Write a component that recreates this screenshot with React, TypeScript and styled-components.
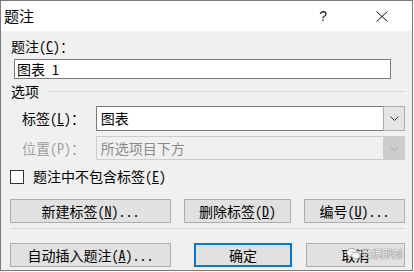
import styled, { createGlobalStyle } from 'styled-components';

const GlobalStyle = createGlobalStyle`
  html, body {
    margin: 0;
    padding: 0;
    background: #ffffff;
  }
  body {
    width: 414px;
    height: 272px;
    overflow: hidden;
  }
`;

const FONT = `"Noto Sans Mono CJK SC", "Noto Sans CJK SC", "Liberation Mono", monospace`;

const Window = styled.div`
  position: relative;
  box-sizing: border-box;
  width: 413px;
  height: 271px;
  border: 1px solid #7a7a7a;
  background: #f0f0f0;
  display: flex;
  flex-direction: column;
  font-family: ${FONT};
  font-size: 14px;
  line-height: 19px;
  color: #000000;
`;

const TitleBar = styled.div`
  height: 30px;
  background: #ffffff;
  display: flex;
  align-items: center;
  padding: 0 23px 0 3px;
`;

const Title = styled.span`
  flex: 1;
  font-family: "Noto Sans CJK SC", sans-serif;
  font-size: 15px;
  line-height: 16px;
`;

const HelpGlyph = styled.span`
  font-family: "Liberation Sans", sans-serif;
  font-size: 14px;
  line-height: 14px;
  color: #1a1a1a;
  margin-right: 48px;
`;

const Body = styled.div`
  flex: 1;
  display: flex;
  flex-direction: column;
  padding: 6px 7px 0 9px;
`;

interface LabelProps { disabled?: boolean; indent?: number }
const Label = styled.span<LabelProps>`
  padding-left: ${(p) => p.indent ?? 0}px;
  color: ${(p) => (p.disabled ? '#a0a0a0' : '#000000')};
  white-space: nowrap;
`;

const TextInput = styled.div`
  box-sizing: border-box;
  margin: 3px 0 0 4px;
  width: 377px;
  height: 20px;
  border: 1px solid #7a7a7a;
  background: #ffffff;
  padding-left: 2px;
  line-height: 18px;
  white-space: pre;
`;

const GroupHeader = styled.div`
  margin-top: 3px;
  display: flex;
  align-items: center;
  gap: 8px;
`;

const GroupLine = styled.div`
  flex: 1;
  height: 1px;
  background: #dcdcdc;
`;

interface RowProps { top: number }
const FieldRow = styled.div<RowProps>`
  margin-top: ${(p) => p.top}px;
  display: flex;
  align-items: center;
`;

const LabelCell = styled.div`
  width: 86px;
  display: flex;
`;

interface ComboProps { disabled?: boolean; h: number }
const Combo = styled.div<ComboProps>`
  box-sizing: border-box;
  width: 310px;
  height: ${(p) => p.h}px;
  border: 1px solid ${(p) => (p.disabled ? '#cccccc' : '#7a7a7a')};
  background: ${(p) => (p.disabled ? '#f0f0f0' : '#ffffff')};
  color: ${(p) => (p.disabled ? '#8a8a8a' : '#000000')};
  display: flex;
  align-items: center;
`;

const ComboText = styled.span`
  flex: 1;
  padding-left: 4px;
`;

interface DropProps { disabled?: boolean }
const DropButton = styled.div<DropProps>`
  box-sizing: border-box;
  width: 22px;
  align-self: stretch;
  margin: -1px -1px -1px 0;
  border: 1px solid ${(p) => (p.disabled ? '#cccccc' : '#adadad')};
  background: ${(p) => (p.disabled ? '#cccccc' : '#e5e5e5')};
  display: flex;
  align-items: center;
  justify-content: center;
`;

const CheckRow = styled.div`
  margin-top: 7px;
  display: flex;
  align-items: center;
  gap: 9px;
`;

const CheckBox = styled.span`
  box-sizing: border-box;
  width: 14px;
  height: 14px;
  border: 1px solid #333333;
  background: #ffffff;
`;

const ButtonRow = styled.div<RowProps>`
  margin-top: ${(p) => p.top}px;
  display: flex;
`;

interface ButtonProps { w: number; gap?: number; primary?: boolean }
const Button = styled.button<ButtonProps>`
  box-sizing: border-box;
  width: ${(p) => p.w}px;
  height: 24px;
  margin-left: ${(p) => p.gap ?? 0}px;
  padding: 0;
  font-family: ${FONT};
  font-size: 14px;
  line-height: 20px;
  color: #000000;
  background: #e1e1e1;
  border: ${(p) => (p.primary ? '2px solid #0078d7' : '1px solid #adadad')};
  white-space: pre;
`;

const Separator = styled.div`
  margin: 5px 0 0 0;
  height: 1px;
  background: #dadada;
`;

const Watermark = styled.div`
  position: absolute;
  right: 10px;
  bottom: 10px;
  display: flex;
  align-items: center;
  gap: 1px;
  font-family: "Noto Sans CJK SC", sans-serif;
  font-size: 10px;
  line-height: 12px;
  color: #ffffff;
  text-shadow: 0 0 1px #5a5a5a, 0 0 1px #5a5a5a;
  opacity: 0.9;
`;

function Chevron({ color }: { color: string }) {
  return (
    <svg width="9" height="5" viewBox="0 0 9 5">
      <path d="M0.5 0.5 L4.5 4.5 L8.5 0.5" fill="none" stroke={color} strokeWidth="1" />
    </svg>
  );
}

function CloseIcon() {
  return (
    <svg width="14" height="11" viewBox="0 0 14 11">
      <path d="M1.5 0.5 L12.5 10.5 M12.5 0.5 L1.5 10.5" stroke="#111" strokeWidth="1" fill="none" />
    </svg>
  );
}

export default function App() {
  return (
    <>
      <GlobalStyle />
      <Window>
        <TitleBar>
          <Title>题注</Title>
          <HelpGlyph>?</HelpGlyph>
          <CloseIcon />
        </TitleBar>
        <Body>
          <Label indent={1}>题注(<u>C</u>)：</Label>
          <TextInput>图表 1</TextInput>

          <GroupHeader>
            <Label indent={1}>选项</Label>
            <GroupLine />
          </GroupHeader>

          <FieldRow top={5}>
            <LabelCell>
              <Label indent={12}>标签(<u>L</u>)：</Label>
            </LabelCell>
            <Combo h={25}>
              <ComboText>图表</ComboText>
              <DropButton>
                <Chevron color="#333" />
              </DropButton>
            </Combo>
          </FieldRow>

          <FieldRow top={5}>
            <LabelCell>
              <Label indent={12} disabled>位置(P)：</Label>
            </LabelCell>
            <Combo h={24} disabled>
              <ComboText>所选项目下方</ComboText>
              <DropButton disabled>
                <Chevron color="#a8a8a8" />
              </DropButton>
            </Combo>
          </FieldRow>

          <CheckRow>
            <CheckBox />
            <span>题注中不包含标签(<u>E</u>)</span>
          </CheckRow>

          <ButtonRow top={13}>
            <Button w={161}>新建标签(<u>N</u>)...</Button>
            <Button w={107} gap={13}>删除标签(<u>D</u>)</Button>
            <Button w={101} gap={13}>编号(<u>U</u>)...</Button>
          </ButtonRow>

          <Separator />

          <ButtonRow top={14}>
            <Button w={161}>自动插入题注(<u>A</u>)...</Button>
            <Button w={98} gap={23} primary>确定</Button>
            <Button w={99} gap={14}>取消</Button>
          </ButtonRow>
        </Body>
        <Watermark>
          <svg width="15" height="13" viewBox="0 0 16 14">
            <ellipse cx="6" cy="6" rx="5.5" ry="4.5" fill="#ffffff" stroke="#8a8a8a" strokeWidth="0.8" />
            <ellipse cx="10.5" cy="9" rx="4.5" ry="3.6" fill="#ffffff" stroke="#8a8a8a" strokeWidth="0.8" />
          </svg>
          <span>数据即刻</span>
        </Watermark>
      </Window>
    </>
  );
}
